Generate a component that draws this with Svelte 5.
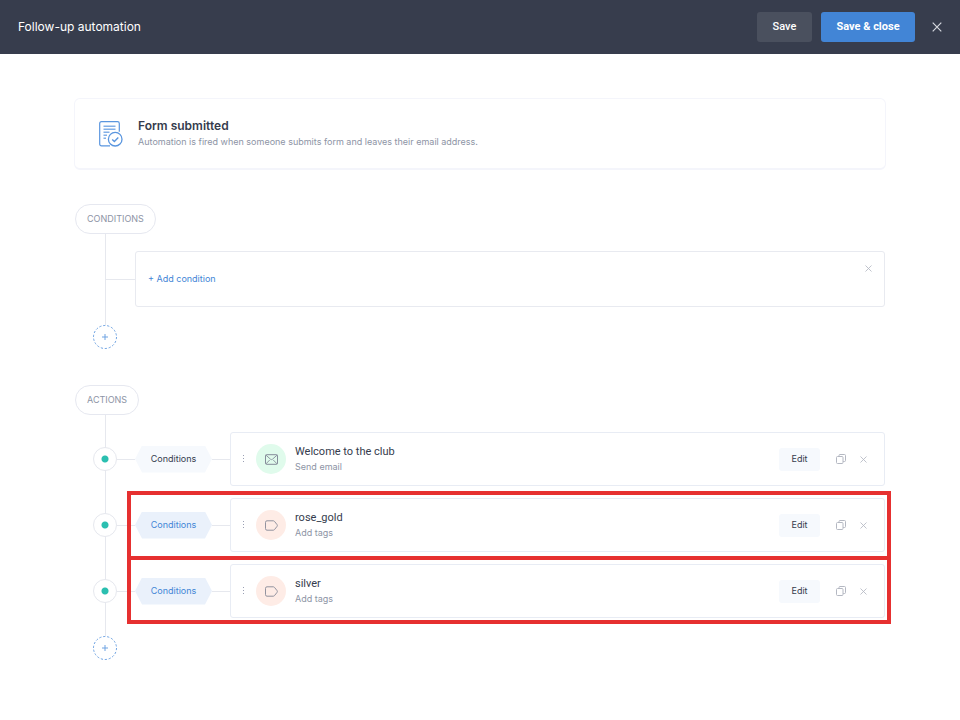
<script>
  let actions = $state([
    { id: 1, name: 'Welcome to the club', type: 'Send email', icon: 'mail', conditional: false },
    { id: 2, name: 'rose_gold', type: 'Add tags', icon: 'tag', conditional: true },
    { id: 3, name: 'silver', type: 'Add tags', icon: 'tag', conditional: true }
  ]);
  let plain = $derived(actions.filter((a) => !a.conditional));
  let flagged = $derived(actions.filter((a) => a.conditional));

  function remove(id) {
    actions = actions.filter((a) => a.id !== id);
  }
</script>

{#snippet cross(size)}
  <svg width={size} height={size} viewBox="0 0 10 10" aria-hidden="true">
    <path d="M.7.7l8.6 8.6M9.3.7L.7 9.3" fill="none" stroke="currentColor" stroke-width="1.2" />
  </svg>
{/snippet}

{#snippet plus()}
  <svg width="24" height="24" viewBox="0 0 24 24" fill="none" stroke="#6fa3e2" aria-hidden="true">
    <circle cx="12" cy="12" r="11.5" stroke-dasharray="2.2 1.8" />
    <path d="M12 9v6M9 12h6" />
  </svg>
{/snippet}

{#snippet row(action)}
  <div class="row">
    <span class="node"></span>
    <span class="line"></span>
    <button class="hex" class:on={action.conditional}>Conditions</button>
    <span class="line"></span>
    <article class="action">
      <svg class="grip" width="3" height="8" viewBox="0 0 3 8" fill="#9a9fb3" aria-hidden="true">
        <path d="M1 0h1v1H1zM1 3h1v1H1zM1 6h1v1H1z" />
      </svg>
      <span class="badge {action.icon}">
        {#if action.icon === 'mail'}
          <svg width="13" height="11" viewBox="0 0 13 11" fill="none" stroke="#858c9a" aria-hidden="true">
            <rect x=".5" y=".7" width="12" height="9.6" rx="1" />
            <path d="M.8 1l4.7 4.2q1 .8 2 0L12.2 1M.8 10l3.9-4M12.2 10L8.3 6" stroke-width=".9" />
          </svg>
        {:else}
          <svg width="13" height="11" viewBox="0 0 13 11" fill="none" stroke="#92939f" aria-hidden="true">
            <path d="M2 .8h6.2q.8 0 1.3.6l2.6 3.3q.5.8 0 1.6L9.5 9.6q-.5.6-1.3.6H2Q.5 10.2.5 8.7V2.3Q.5.8 2 .8z" />
          </svg>
        {/if}
      </span>
      <div class="text">
        <h3>{action.name}</h3>
        <p>{action.type}</p>
      </div>
      <button class="edit">Edit</button>
      <button class="icon" aria-label="Duplicate">
        <svg width="10" height="10" viewBox="0 0 10 10" fill="none" stroke="currentColor" aria-hidden="true">
          <rect x=".5" y="2.5" width="6.5" height="7" rx="1" />
          <path d="M3 2.3V1.5q0-1 1-1h4.5q1 0 1 1v5q0 1-1 1H7.2" />
        </svg>
      </button>
      <button class="icon last" aria-label="Remove" onclick={() => remove(action.id)}>
        {@render cross(7)}
      </button>
    </article>
  </div>
{/snippet}

<header>
  <h1>Follow-up automation</h1>
  <button class="save">Save</button>
  <button class="save primary">Save &amp; close</button>
  <button class="close" aria-label="Close">{@render cross(10)}</button>
</header>

<main>
  <section class="trigger">
    <svg width="24" height="26" viewBox="0 0 24 26" fill="none" stroke="#5a96df" aria-hidden="true">
      <path d="M11 24.9H2.5q-1.8 0-1.8-1.8V2.5Q.7.7 2.5.7h16q1.8 0 1.8 1.8v8.2" stroke-width="1.2" />
      <path d="M4.5 5.3h12M4.5 8.3h12M4.5 11.3h6M4.5 14.3h3.5M4.5 17.3h2.5" stroke-width="1.4" opacity=".75" />
      <circle cx="16.2" cy="18.2" r="6.8" stroke-width="1.3" />
      <path d="M13.2 18.4l2.2 2.1 3.9-4" stroke-width="1.4" />
    </svg>
    <div>
      <h2>Form submitted</h2>
      <p>Automation is fired when someone submits form and leaves their email address.</p>
    </div>
  </section>

  <section class="flow">
    <h2 class="pill">CONDITIONS</h2>
    <div class="branch">
      <span class="line"></span>
      <div class="condition">
        <a href="#add-condition">+ Add condition</a>
        <button class="icon" aria-label="Remove condition">{@render cross(7)}</button>
      </div>
    </div>
    <button class="add" aria-label="Add condition group">{@render plus()}</button>
  </section>

  <section class="flow">
    <h2 class="pill">ACTIONS</h2>
    <div class="rows">
      {#each plain as action (action.id)}
        {@render row(action)}
      {/each}
      <div class="rows flagged">
        {#each flagged as action (action.id)}
          {@render row(action)}
        {/each}
      </div>
    </div>
    <button class="add" aria-label="Add action">{@render plus()}</button>
  </section>
</main>

<style>
  :global(body) {
    background: #fff;
    color: #353c4d;
    font-family: Inter, 'Liberation Sans', sans-serif;
    font-size: 9px;
    line-height: 12px;
    margin: 0;
  }
  h1, h2, h3, p {
    font-weight: 400;
    margin: 0;
  }
  svg {
    display: block;
    flex: none;
  }
  button {
    background: none;
    border: 0;
    color: inherit;
    cursor: pointer;
    font: inherit;
    padding: 0;
  }

  header {
    align-items: center;
    background: #373d4d;
    color: #fff;
    display: flex;
    height: 54px;
    padding: 0 18px;
  }
  h1 {
    flex: 1;
    font-size: 12px;
    line-height: 16px;
  }
  .save {
    background: #4a505e;
    border-radius: 3px;
    font-family: Roboto, sans-serif;
    font-size: 11px;
    font-weight: 500;
    height: 30px;
    margin-right: 9px;
    width: 55px;
  }
  .save.primary {
    background: #4285d6;
    font-weight: 700;
    margin-right: 17px;
    width: 94px;
  }
  .close {
    color: #d5d8de;
  }

  main {
    padding: 44px 75px;
  }
  .trigger {
    align-items: center;
    border: 1px solid #f4f5fb;
    border-bottom-width: 2px;
    border-radius: 6px;
    display: flex;
    gap: 15px;
    height: 69px;
    margin: 0 -1px;
    padding: 0 24px;
  }
  .trigger h2 {
    font-size: 12px;
    font-weight: 600;
    line-height: 16px;
    margin-bottom: 1px;
  }
  .trigger p {
    color: #8d94a5;
    line-height: 14px;
  }

  /* the vertical rail is painted behind the pill, nodes and add button */
  .flow {
    background: linear-gradient(#e6e8ee, #e6e8ee) 30px 0 / 1px 100% no-repeat;
    margin-top: 34px;
  }
  .flow + .flow {
    margin-top: 36px;
  }
  .pill {
    background: #fff;
    border: 1px solid #e6e8f0;
    border-radius: 15px;
    box-sizing: border-box;
    color: #8d94a5;
    font-size: 9px;
    height: 30px;
    line-height: 28px;
    margin-bottom: 17px;
    padding: 0 11px;
    width: fit-content;
  }
  .line {
    background: #e6e8ee;
    flex: 0 0 18px;
    height: 1px;
  }
  .branch {
    align-items: center;
    display: flex;
    padding-left: 30px;
  }
  .branch .line {
    flex-basis: 30px;
  }
  .condition {
    align-items: center;
    border: 1px solid #e8eaf0;
    border-radius: 3px;
    box-sizing: border-box;
    display: flex;
    flex: 1;
    height: 56px;
    justify-content: space-between;
    padding: 0 12px;
  }
  .condition a {
    color: #4285d6;
    text-decoration: none;
  }
  .condition .icon {
    align-self: flex-start;
    margin-top: 13px;
  }
  .add {
    background: #fff;
    border-radius: 50%;
    display: block;
    margin: 18px 0 0 18px;
  }

  .rows {
    display: flex;
    flex-direction: column;
    gap: 12px;
  }
  .row {
    align-items: center;
    display: flex;
    padding-left: 18px;
    position: relative;
  }
  .node {
    background: radial-gradient(circle, #2bbfb0 3px, #fff 4px);
    border: 1px solid #e6e8ee;
    border-radius: 50%;
    box-sizing: border-box;
    flex: none;
    height: 24px;
    width: 24px;
  }
  .hex {
    background: #f6f9fd;
    clip-path: polygon(7px 0, calc(100% - 7px) 0, 100% 50%, calc(100% - 7px) 100%, 7px 100%, 0 50%);
    flex: none;
    height: 27px;
    width: 77px;
  }
  .hex.on {
    background: #eaf1fb;
    color: #4285d6;
  }
  .action {
    align-items: center;
    border: 1px solid #e8ecf4;
    border-radius: 3px;
    box-sizing: border-box;
    display: flex;
    flex: 1;
    height: 54px;
    padding: 0 17px 0 11px;
  }
  .badge {
    align-items: center;
    border-radius: 50%;
    display: flex;
    height: 30px;
    justify-content: center;
    margin: 0 9px 0 11px;
    width: 30px;
  }
  .mail {
    background: #e0fbec;
  }
  .tag {
    background: #feece6;
  }
  .text {
    flex: 1;
  }
  h3 {
    font-family: Roboto, sans-serif;
    font-size: 11px;
    line-height: 16px;
  }
  .text p {
    color: #8d94a5;
    line-height: 14px;
  }
  .edit {
    background: #f6f9fd;
    border-radius: 3px;
    height: 23px;
    margin-right: 16px;
    width: 41px;
  }
  .icon {
    color: #b4b8c2;
  }
  .icon.last {
    margin-left: 14px;
  }

  /* red frames over the conditional actions */
  .flagged {
    position: relative;
  }
  .flagged::after {
    border: 4px solid #e63030;
    content: '';
    inset: -7px -6px -6px 52px;
    pointer-events: none;
    position: absolute;
  }
  .flagged .row + .row::before {
    background: #e63030;
    content: '';
    height: 4px;
    left: 52px;
    position: absolute;
    right: -6px;
    top: -8px;
  }
</style>
